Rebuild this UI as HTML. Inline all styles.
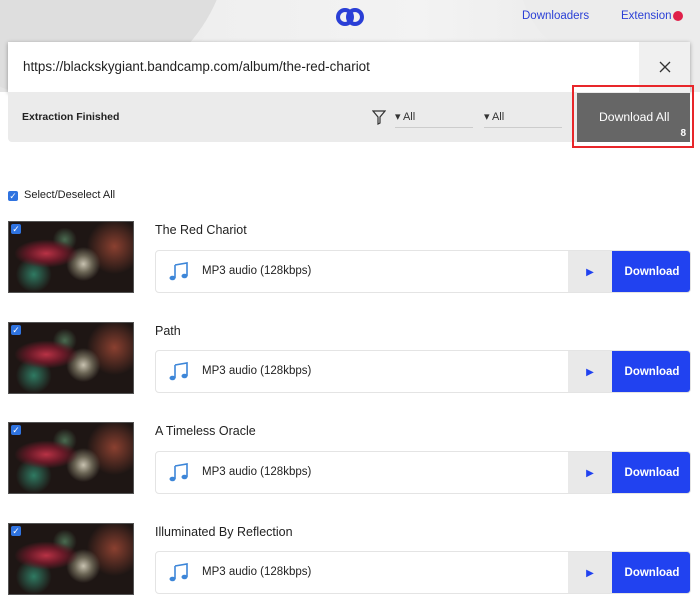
<html><head><style>
*{margin:0;padding:0;box-sizing:border-box}
body{width:700px;height:599px;overflow:hidden;background:#fff;font-family:"Liberation Sans",sans-serif;position:relative}
.hdr{position:absolute;left:0;top:0;width:700px;height:92px;overflow:hidden;background:linear-gradient(90deg,#e4e4e4,#efefef 30%,#f3f3f3 60%,#e6e6e6)}
.sw{position:absolute;border-radius:50%;}
.a{position:absolute}
.nav{font-size:11.5px;color:#2a3fd6}
.url{position:absolute;left:8px;top:42px;width:682px;height:50px;background:#fff;box-shadow:0 1px 4px rgba(0,0,0,.35);}
.url span{position:absolute;left:15px;top:17px;font-size:13.4px;color:#222}
.x{position:absolute;right:0;top:0;width:51px;height:50px;background:#f0f0f0}
.bar{position:absolute;left:8px;top:92px;width:682px;height:50px;background:#ebebeb;border-radius:0 0 4px 4px}
.dl{position:absolute;left:577px;top:93px;width:113px;height:49px;background:#666;color:#fff;font-size:12.2px}
.red{position:absolute;left:572px;top:85px;width:122px;height:63px;border:2px solid #e8262a}
.sel{position:absolute;font-size:11px;color:#333;border-bottom:1px solid #ccc;width:78px;height:18px}
.cb{position:absolute;width:10px;height:10px;background:#2f73e0;border-radius:2px;color:#fff;font-size:9px;line-height:10px;text-align:center}
.thumb{position:absolute;left:8px;width:126px;height:72px;background:radial-gradient(ellipse at 30% 45%,#b83245 0,#6a1a28 14%,transparent 26%),radial-gradient(circle at 60% 60%,#c8c2b0 0,#6a6454 10%,transparent 20%),radial-gradient(circle at 20% 75%,#2f7a62 0,transparent 16%),radial-gradient(circle at 85% 35%,#8a4030 0,transparent 24%),radial-gradient(circle at 45% 25%,#4a6a50 0,transparent 14%),#1e1614;border:1px solid #555}
.title{position:absolute;left:155px;font-size:12.5px;color:#222}
.box{position:absolute;left:155px;width:536px;height:43px;border:1px solid #e4e4e4;border-radius:4px;background:#fff;overflow:hidden}
.box .t{position:absolute;left:46px;top:14px;font-size:11.5px;color:#222}
.box .p{position:absolute;left:412px;top:0;width:44px;height:43px;background:#e9e9e9;color:#2142f0;font-size:10px;text-align:center;line-height:43px}
.box .d{position:absolute;left:456px;top:0;width:80px;height:43px;background:#2142f0;color:#fff;font-size:11.5px;font-weight:bold;text-align:center;line-height:43px}
.note{position:absolute;left:12px;top:10px}
</style></head><body>
<div class="hdr">
<div class="sw" style="left:-100px;top:-230px;width:330px;height:330px;background:#dedede"></div>
<div class="sw" style="left:520px;top:-140px;width:420px;height:240px;background:#ececec"></div>
</div>
<svg class="a" style="left:335px;top:7px" width="30" height="20" viewBox="0 0 30 20"><circle cx="10" cy="10" r="7" fill="none" stroke="#2a3fd6" stroke-width="4"/><circle cx="20" cy="10" r="7" fill="none" stroke="#2a3fd6" stroke-width="4"/></svg>
<div class="a nav" style="left:522px;top:10px">Downloaders</div>
<div class="a nav" style="left:621px;top:10px">Extension</div>
<div class="a" style="left:673px;top:11px;width:10px;height:10px;border-radius:50%;background:#e0204a"></div>
<div class="url"><span>https://blackskygiant.bandcamp.com/album/the-red-chariot</span><div class="x"><svg style="position:absolute;left:20px;top:19px" width="12" height="12"><path d="M1 1L11 11M11 1L1 11" stroke="#333" stroke-width="1.3"/></svg></div></div>
<div class="bar">
<div class="a" style="left:14px;top:19px;font-size:10.5px;font-weight:bold;color:#222">Extraction Finished</div>
<svg class="a" style="left:364px;top:18px" width="14" height="15"><path d="M1 1H13L8 7V13L6 14V7Z" fill="none" stroke="#333" stroke-width="1.2"/></svg>
<div class="sel" style="left:387px;top:18px">▾ All</div>
<div class="sel" style="left:476px;top:18px">▾ All</div>
</div>
<div class="dl"><div class="a" style="left:22px;top:17px">Download All</div><div class="a" style="right:4px;top:35px;font-size:10px;font-weight:bold">8</div></div>
<div class="red"></div>
<div class="cb" style="left:8px;top:191px">✓</div>
<div class="a" style="left:24px;top:189px;font-size:11px;color:#222">Select/Deselect All</div>

<div class="thumb" style="top:221px"></div><div class="cb" style="left:11px;top:224px">✓</div>
<div class="title" style="top:223px">The Red Chariot</div>
<div class="box" style="top:250px"><span class="note"><svg width="22" height="22" viewBox="0 0 22 22"><path d="M7 4L19 2V15M7 4V17" fill="none" stroke="#3d86d8" stroke-width="1.6"/><ellipse cx="4.5" cy="17" rx="3" ry="2.3" fill="#3d86d8"/><ellipse cx="16.5" cy="15" rx="3" ry="2.3" fill="#3d86d8"/></svg></span><span class="t">MP3 audio (128kbps)</span><span class="p">▶</span><span class="d">Download</span></div>

<div class="thumb" style="top:322px"></div><div class="cb" style="left:11px;top:325px">✓</div>
<div class="title" style="top:324px">Path</div>
<div class="box" style="top:350px"><span class="note"><svg width="22" height="22" viewBox="0 0 22 22"><path d="M7 4L19 2V15M7 4V17" fill="none" stroke="#3d86d8" stroke-width="1.6"/><ellipse cx="4.5" cy="17" rx="3" ry="2.3" fill="#3d86d8"/><ellipse cx="16.5" cy="15" rx="3" ry="2.3" fill="#3d86d8"/></svg></span><span class="t">MP3 audio (128kbps)</span><span class="p">▶</span><span class="d">Download</span></div>

<div class="thumb" style="top:422px"></div><div class="cb" style="left:11px;top:425px">✓</div>
<div class="title" style="top:424px">A Timeless Oracle</div>
<div class="box" style="top:451px"><span class="note"><svg width="22" height="22" viewBox="0 0 22 22"><path d="M7 4L19 2V15M7 4V17" fill="none" stroke="#3d86d8" stroke-width="1.6"/><ellipse cx="4.5" cy="17" rx="3" ry="2.3" fill="#3d86d8"/><ellipse cx="16.5" cy="15" rx="3" ry="2.3" fill="#3d86d8"/></svg></span><span class="t">MP3 audio (128kbps)</span><span class="p">▶</span><span class="d">Download</span></div>

<div class="thumb" style="top:523px"></div><div class="cb" style="left:11px;top:526px">✓</div>
<div class="title" style="top:525px">Illuminated By Reflection</div>
<div class="box" style="top:551px"><span class="note"><svg width="22" height="22" viewBox="0 0 22 22"><path d="M7 4L19 2V15M7 4V17" fill="none" stroke="#3d86d8" stroke-width="1.6"/><ellipse cx="4.5" cy="17" rx="3" ry="2.3" fill="#3d86d8"/><ellipse cx="16.5" cy="15" rx="3" ry="2.3" fill="#3d86d8"/></svg></span><span class="t">MP3 audio (128kbps)</span><span class="p">▶</span><span class="d">Download</span></div>
</body></html>
